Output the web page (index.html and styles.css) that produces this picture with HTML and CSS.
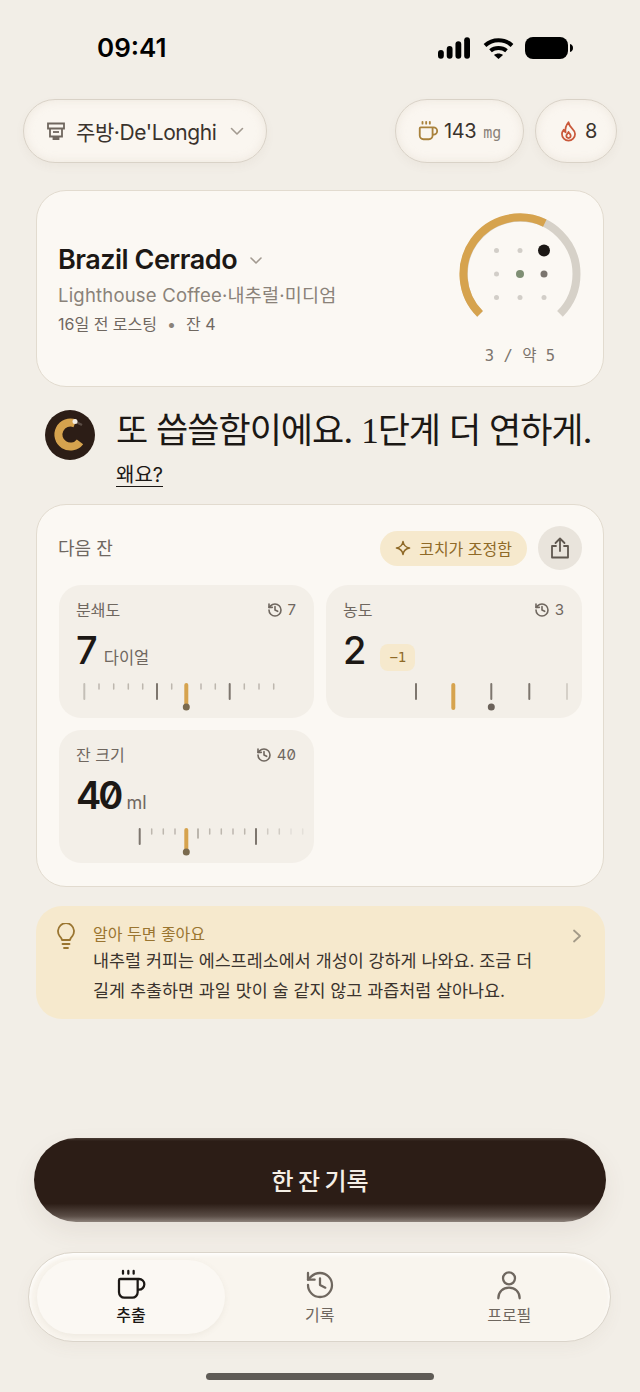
FILE: index.html
```html
<!DOCTYPE html>
<html lang="ko">
<head>
  <meta charset="UTF-8" />
  <meta name="viewport" content="width=device-width, initial-scale=1.0"/>
  <title>추출</title>
  <link rel="stylesheet" href="styles.css">
</head>
<body>
  <div class="screen">

    <div class="status">
      <span class="time">09:41</span>
      <div class="status-icons">
        <svg class="ico-signal" width="32" height="22" viewBox="0 0 33 22" fill="#000">
          <rect x="0" y="13" width="6" height="9" rx="3"/>
          <rect x="9" y="9" width="6" height="13" rx="3"/>
          <rect x="18" y="4" width="6" height="18" rx="3"/>
          <rect x="27" y="0" width="6" height="22" rx="3"/>
        </svg>
        <svg class="ico-wifi" width="31" height="22" viewBox="0 0 31 22" fill="none" stroke="#000" stroke-width="4">
          <path d="M2 8.5C9.5 1.500 21.500 1.500 29 8.5"/>
          <path d="M7.500 13.800C12 10 19 10 23.500 13.800"/>
          <path d="M11 18l4.500 4 4.500-4c-2.500-2-6.500-2-9 0z" fill="#000" stroke="none"/>
        </svg>
        <svg width="48" height="22" viewBox="0 0 48 22" fill="#000">
          <rect x="0" y="0" width="43" height="22" rx="8"/>
          <path d="M45 7c2 .5 3 2 3 4s-1 3.500-3 4z"/>
        </svg>
      </div>
    </div>

    <div class="topbar">
      <div class="pill pill-machine">
        <svg width="20" height="20" viewBox="0 0 20 20" fill="none" stroke="#6f665e" stroke-width="1.8">
          <path d="M2 2.500h16v5H2z"/>
          <path d="M4 7.500v8h12v-8"/>
          <path d="M7 11h6"/>
          <path d="M7.500 15.500v2.500h5v-2.500" fill="#6f665e"/>
        </svg>
        <span class="pill-text">주방·De'Longhi</span>
        <svg class="chev" width="16" height="16" viewBox="0 0 16 16" fill="none" stroke="#a29a90" stroke-width="1.6" stroke-linecap="round" stroke-linejoin="round"><path d="M2.500 5.500L8 11l5.500-5.500"/></svg>
      </div>
      <div class="pill-group">
        <div class="pill pill-caffeine">
          <svg width="22" height="22" viewBox="0 0 24 24" fill="none" stroke="#a9823c" stroke-width="2" stroke-linecap="round" stroke-linejoin="round">
            <path d="M10 2v2M14 2v2M6 2v2"/>
            <path d="M16 8a1 1 0 0 1 1 1v8a4 4 0 0 1-4 4H7a4 4 0 0 1-4-4V9a1 1 0 0 1 1-1h14a4 4 0 1 1 0 8h-1"/>
          </svg>
          <span class="pill-text pill-num">143</span>
          <span class="unit">mg</span>
        </div>
        <div class="pill pill-streak">
          <svg width="21" height="22" viewBox="0 0 24 24" fill="none" stroke="#c9583a" stroke-width="2" stroke-linecap="round" stroke-linejoin="round">
            <path d="M12 2c.5 3 2 5 4 7 2 2 3.500 4 3.500 6.500a7.500 7.500 0 0 1-15 0c0-2 .8-3.500 2-5 .3 1.500 1 2.500 2.200 3C8 10 9.500 5 12 2z"/>
            <path d="M12 13c.3 1.500 2.500 2.500 2.500 4.500a2.500 2.500 0 0 1-5 0c0-1.800 2-2.800 2.500-4.500z"/>
          </svg>
          <span class="pill-text pill-num">8</span>
        </div>
      </div>
    </div>

    <section class="card bean">
      <div class="bean-info">
        <div class="bean-title">
          <h1>Brazil Cerrado</h1>
          <svg width="14" height="14" viewBox="0 0 14 14" fill="none" stroke="#a29a90" stroke-width="1.6" stroke-linecap="round" stroke-linejoin="round"><path d="M2 5l5 5 5-5"/></svg>
        </div>
        <p class="bean-sub">Lighthouse Coffee·내추럴·미디엄</p>
        <p class="bean-meta">16일 전 로스팅<span class="sep">•</span>잔 4</p>
      </div>
      <div class="gauge">
        <svg width="130" height="118" viewBox="0 0 130 118" fill="none">
          <path d="M25.05 100.95A56.5 56.5 0 0 1 104.95 21.05A56.5 56.5 0 0 1 104.95 100.95" stroke="#d6d1c8" stroke-width="8"/>
          <path d="M25.05 100.95A56.5 56.5 0 0 1 89.8 10.2" stroke="#d6a34e" stroke-width="8"/>
          <g fill="#d2cec8">
            <circle cx="41.5" cy="37.5" r="2.5"/>
            <circle cx="65" cy="37.5" r="2.5"/>
            <circle cx="41.5" cy="61" r="2.5"/>
            <circle cx="41.5" cy="84.5" r="2.5"/>
            <circle cx="65" cy="84.5" r="2.5"/>
            <circle cx="89" cy="84.5" r="2.5"/>
          </g>
          <circle cx="89" cy="37.5" r="6" fill="#1c1815"/>
          <circle cx="65" cy="61" r="4" fill="#7f8f74"/>
          <circle cx="89" cy="61" r="3.5" fill="#7b756e"/>
        </svg>
        <span class="gauge-label">3 / 약 5</span>
      </div>
    </section>

    <section class="coach">
      <svg class="avatar" width="50" height="50" viewBox="0 0 50 50" fill="none">
        <circle cx="25" cy="25" r="25" fill="#2c1d16"/>
        <path d="M30 13.500A12 12 0 1 0 35 31.800" stroke="#d6a34e" stroke-width="8"/>
        <path d="M30 11.500l7 3.500" stroke="#5a4c44" stroke-width="2.500"/>
        <circle cx="30" cy="11.500" r="2.500" fill="#f0ebe3"/>
      </svg>
      <div class="coach-text">
        <h2>또 씁쓸함이에요. <span class="serif-num">1</span>단계 더 연하게.</h2>
        <a class="why">왜요?</a>
      </div>
    </section>

    <section class="card next">
      <div class="next-head">
        <span class="next-title">다음 잔</span>
        <div class="next-actions">
          <span class="coach-badge">
            <svg width="16" height="16" viewBox="0 0 16 16" fill="none" stroke="#8f6a28" stroke-width="1.6" stroke-linejoin="round"><path d="M8 1.500c.6 3.800 2.500 5.800 6.500 6.500-4 .7-5.900 2.700-6.500 6.500C7.400 10.700 5.500 8.700 1.500 8 5.500 7.300 7.400 5.300 8 1.500z"/></svg>
            코치가 조정함
          </span>
          <span class="share">
            <svg width="20" height="22" viewBox="0 0 20 22" fill="none" stroke="#5f574f" stroke-width="1.8" stroke-linecap="round" stroke-linejoin="round">
              <path d="M10 14V2M5.500 6L10 1.500 14.500 6"/>
              <path d="M6 9H2v11.500h16V9h-4"/>
            </svg>
          </span>
        </div>
      </div>

      <div class="tiles">
        <div class="tile">
          <div class="tile-head">
            <span>분쇄도</span>
            <span class="prev">
              <svg class="hist" width="16" height="16" viewBox="0 0 24 24" fill="none" stroke="#6f675f" stroke-width="2.4" stroke-linecap="round" stroke-linejoin="round"><path d="M3 12a9 9 0 1 0 9-9 9.75 9.75 0 0 0-6.74 2.74L3 8"/><path d="M3 3v5h5"/><path d="M12 7v5l4 2"/></svg>
              7
            </span>
          </div>
          <div class="tile-value"><b>7</b><span class="tile-unit">다이얼</span></div>
          <svg class="ruler" width="255" height="30" viewBox="0 0 255 30" fill="none" stroke-linecap="round">
            <path d="M25.3 1v15" stroke="#c4bfb7" stroke-width="2"/>
            <path d="M40 1v5M54.7 1v5M69.3 1v5M83.7 1v5M112.7 1v5M142 1v5M156.3 1v5M185.3 1v5M200 1v5M214.7 1v5" stroke="#bdb7ae" stroke-width="1.5"/>
            <path d="M98 1v15M170.7 1v15" stroke="#7d766e" stroke-width="2"/>
            <path d="M127.3 2v21" stroke="#d6a34e" stroke-width="4"/>
            <circle cx="127.3" cy="24" r="3.5" fill="#7a6a4e"/>
          </svg>
        </div>

        <div class="tile">
          <div class="tile-head">
            <span>농도</span>
            <span class="prev">
              <svg class="hist" width="16" height="16" viewBox="0 0 24 24" fill="none" stroke="#6f675f" stroke-width="2.4" stroke-linecap="round" stroke-linejoin="round"><path d="M3 12a9 9 0 1 0 9-9 9.75 9.75 0 0 0-6.74 2.74L3 8"/><path d="M3 3v5h5"/><path d="M12 7v5l4 2"/></svg>
              3
            </span>
          </div>
          <div class="tile-value"><b>2</b><span class="delta">−1</span></div>
          <svg class="ruler" width="256" height="30" viewBox="0 0 256 30" fill="none" stroke-linecap="round">
            <path d="M90 1v15M165.3 1v15M203.3 1v15" stroke="#7d766e" stroke-width="2"/>
            <path d="M241 1v15" stroke="#d5d0c8" stroke-width="2"/>
            <path d="M127.3 2v23" stroke="#d6a34e" stroke-width="4"/>
            <circle cx="165.3" cy="24" r="3.5" fill="#6b625a"/>
          </svg>
        </div>

        <div class="tile">
          <div class="tile-head">
            <span>잔 크기</span>
            <span class="prev">
              <svg class="hist" width="16" height="16" viewBox="0 0 24 24" fill="none" stroke="#6f675f" stroke-width="2.4" stroke-linecap="round" stroke-linejoin="round"><path d="M3 12a9 9 0 1 0 9-9 9.75 9.75 0 0 0-6.74 2.74L3 8"/><path d="M3 3v5h5"/><path d="M12 7v5l4 2"/></svg>
              <span class="zero">40</span>
            </span>
          </div>
          <div class="tile-value"><b class="zero">40</b><span class="tile-unit unit-ml">ml</span></div>
          <svg class="ruler" width="255" height="30" viewBox="0 0 255 30" fill="none" stroke-linecap="round">
            <path d="M80.7 1v15M197 1v15" stroke="#7d766e" stroke-width="2"/>
            <path d="M92.7 1v5M104.3 1v5M116 1v5M150.7 1v5M162.3 1v5M174 1v5M185.7 1v5" stroke="#bdb7ae" stroke-width="1.5"/>
            <path d="M139 1v9" stroke="#a9a39a" stroke-width="1.5"/>
            <path d="M208.7 1v5M220.3 1v5" stroke="#d0cbc3" stroke-width="1.5"/>
            <path d="M232 1v5M243.7 1v5" stroke="#e4e0d9" stroke-width="1.5"/>
            <path d="M127.3 2v21" stroke="#d6a34e" stroke-width="4"/>
            <circle cx="127.3" cy="24" r="3.5" fill="#7a6a4e"/>
          </svg>
        </div>
      </div>
    </section>

    <section class="tip">
      <svg class="tip-icon" width="20" height="26" viewBox="0 0 20 26" fill="none" stroke="#9a7530" stroke-width="1.8" stroke-linecap="round" stroke-linejoin="round">
        <path d="M6 17c-.3-1.500-1-2.500-2.300-3.900A8 8 0 1 1 16.300 13.100C15 14.500 14.300 15.500 14 17z"/>
        <path d="M6.500 21h7M8 25h4"/>
      </svg>
      <div class="tip-body">
        <div class="tip-title">알아 두면 좋아요</div>
        <p>내추럴 커피는 에스프레소에서 개성이 강하게 나와요. 조금 더<br>길게 추출하면 과일 맛이 술 같지 않고 과즙처럼 살아나요.</p>
      </div>
      <svg class="tip-arrow" width="10" height="14" viewBox="0 0 10 14" fill="none" stroke="#a39a88" stroke-width="1.8" stroke-linecap="round" stroke-linejoin="round"><path d="M2 1.500L8 7l-6 5.500"/></svg>
    </section>

    <button class="cta">한 잔 기록</button>

    <nav class="tabs">
      <div class="tab active">
        <svg width="32" height="32" viewBox="0 0 24 24" fill="none" stroke="#1c1815" stroke-width="1.7" stroke-linecap="round" stroke-linejoin="round">
          <path d="M10 1.500v2M14 1.500v2M6 1.500v2"/>
          <path d="M16 7.500a1 1 0 0 1 1 1v9a4 4 0 0 1-4 4H7a4 4 0 0 1-4-4v-9a1 1 0 0 1 1-1h14a4 4 0 1 1 0 8h-1"/>
        </svg>
        <span>추출</span>
      </div>
      <div class="tab">
        <svg width="32" height="32" viewBox="0 0 24 24" fill="none" stroke="#6f675f" stroke-width="1.7" stroke-linecap="round" stroke-linejoin="round">
          <path d="M3 12a9 9 0 1 0 9-9 9.75 9.75 0 0 0-6.74 2.74L3 8"/><path d="M3 3v5h5"/><path d="M12 7v5l4 2"/>
        </svg>
        <span>기록</span>
      </div>
      <div class="tab">
        <svg width="32" height="32" viewBox="0 0 24 24" fill="none" stroke="#6f675f" stroke-width="1.7" stroke-linecap="round" stroke-linejoin="round">
          <circle cx="12" cy="7" r="4.500"/><path d="M20 22c0-5-3.500-8-8-8s-8 3-8 8"/>
        </svg>
        <span>프로필</span>
      </div>
    </nav>

    <div class="home-bar"></div>
  </div>
</body>
</html>
```

FILE: styles.css
```css
* {
  box-sizing: border-box;
}

body {
  margin: 0;
  background-color: #f2eee7;
  color: #1c1815;
  font-family: "Inter", "Noto Sans CJK KR", sans-serif;
}

h1, h2, p {
  margin: 0;
  font-weight: inherit;
}

.screen {
  display: flex;
  flex-direction: column;
  width: 640px;
  height: 1392px;
  padding-bottom: 12px;
  overflow: hidden;
}

/* status bar */
.status {
  display: flex;
  justify-content: space-between;
  align-items: center;
  height: 99px;
  padding: 0 67px 4px 97px;
  flex-shrink: 0;
}

.time {
  font-size: 26px;
  font-weight: 600;
  color: #000;
}

.status-icons {
  display: flex;
  align-items: center;
}

.ico-signal {
  margin-right: 13px;
}

.ico-wifi {
  margin-right: 11px;
}

/* top pills */
.topbar {
  display: flex;
  justify-content: space-between;
  height: 64px;
  padding: 0 23px;
  flex-shrink: 0;
}

.pill-group {
  display: flex;
  gap: 11px;
}

.pill {
  display: flex;
  align-items: center;
  height: 64px;
  border-radius: 32px;
  border: 1px solid #d9d2c7;
  background-color: #faf6f0;
  box-shadow: inset 0 0 10px rgba(232, 224, 212, 0.7), 0 4px 10px rgba(120, 100, 80, 0.05);
}

.pill-text {
  font-size: 21px;
  color: #3a332d;
  letter-spacing: -0.4px;
}

.pill-machine {
  width: 244px;
  padding-left: 22px;
  gap: 10px;
}

.chev {
  margin-left: 2px;
}

.pill-caffeine {
  width: 129px;
  padding-left: 21px;
  gap: 5px;
}

.pill-num {
  font-size: 20px;
}

.unit {
  font-family: "DejaVu Sans Mono", monospace;
  font-size: 15px;
  color: #8a8279;
  margin-left: 2px;
  margin-top: 3px;
}

.pill-streak {
  width: 82px;
  padding-left: 22px;
  gap: 6px;
}

/* cards */
.card {
  margin: 0 36px;
  background-color: #fbf8f3;
  border: 1px solid #e2dbcf;
  border-radius: 30px;
  flex-shrink: 0;
}

.bean {
  display: flex;
  justify-content: space-between;
  height: 197px;
  margin-top: 27px;
  padding: 0 22px 0 21px;
}

.bean-info {
  padding-top: 51px;
}

.bean-title {
  display: flex;
  align-items: center;
  gap: 12px;
}

h1 {
  font-size: 27px;
  font-weight: 600;
  letter-spacing: -0.5px;
  line-height: 36px;
}

.bean-sub {
  margin-top: 4px;
  font-size: 18.5px;
  line-height: 26px;
  letter-spacing: 0.2px;
  color: #8a8279;
}

.bean-meta {
  margin-top: 4px;
  font-size: 16px;
  line-height: 24px;
  color: #6f675f;
}

.sep {
  margin: 0 10px;
  color: #8a8279;
}

.gauge {
  display: flex;
  flex-direction: column;
  align-items: center;
  padding-top: 22px;
  margin-right: -4px;
}

.gauge-label {
  margin-top: 12px;
  font-family: "DejaVu Sans Mono", "Noto Sans CJK KR", monospace;
  font-size: 15.5px;
  color: #7c756d;
}

/* coach line */
.coach {
  display: flex;
  gap: 21px;
  margin: 23px 0 0 45px;
  height: 94px;
  flex-shrink: 0;
}

.avatar {
  flex-shrink: 0;
}

h2 {
  font-size: 35px;
  line-height: 40px;
  letter-spacing: -1px;
  white-space: nowrap;
  color: #1c1815;
}

.serif-num {
  font-family: "Liberation Serif", serif;
}

.why {
  display: inline-block;
  margin-top: 12px;
  font-size: 20px;
  line-height: 22px;
  color: #1c1815;
  border-bottom: 1.5px solid #1c1815;
}

/* next shot card */
.next {
  height: 383px;
  padding: 21px 22px 0;
}

.next-head {
  display: flex;
  justify-content: space-between;
  align-items: center;
  height: 44px;
}

.next-title {
  margin: -2px 0 0 -1px;
  font-size: 18px;
  color: #6f675f;
}

.next-actions {
  display: flex;
  align-items: center;
  gap: 11px;
  margin-right: -1px;
}

.coach-badge {
  display: flex;
  align-items: center;
  gap: 8px;
  height: 35px;
  padding: 0 15px;
  border-radius: 18px;
  background-color: #f6e9cd;
  color: #8f6a28;
  font-size: 16px;
}

.share {
  display: flex;
  align-items: center;
  justify-content: center;
  width: 44px;
  height: 44px;
  border-radius: 50%;
  background-color: #e9e4dc;
}

.tiles {
  display: grid;
  grid-template-columns: 255px 256px;
  grid-auto-rows: 133px;
  gap: 12px;
  margin-top: 15px;
}

.tile {
  position: relative;
  background-color: #f3efe8;
  border-radius: 22px;
  padding: 14px 18px 0 17px;
}

.tile-head {
  display: flex;
  justify-content: space-between;
  align-items: center;
  font-size: 16px;
  line-height: 22px;
  color: #6f675f;
}

.prev {
  display: flex;
  align-items: center;
  gap: 5px;
  font-size: 15px;
}

.hist {
  display: block;
}

.tile-value {
  display: flex;
  align-items: baseline;
  margin-top: 7px;
  height: 44px;
}

.tile-value b {
  font-size: 38px;
  font-weight: 500;
  line-height: 44px;
  color: #1c1815;
}

.tile-value b.zero {
  font-weight: 600;
  letter-spacing: -3px;
}

.zero {
  font-feature-settings: "zero" 1;
}

.tile-unit {
  margin-left: 6px;
  font-size: 16.5px;
  color: #6f675f;
}

.unit-ml {
  margin-left: 6px;
  font-size: 18px;
}

.delta {
  margin-left: 14px;
  padding: 0 9px;
  height: 27px;
  line-height: 27px;
  border-radius: 8px;
  background-color: #f6e9cd;
  color: #8f6a28;
  font-family: "DejaVu Sans Mono", monospace;
  font-size: 14px;
  align-self: flex-end;
  transform: translateY(-1px);
}

.ruler {
  position: absolute;
  left: 0;
  top: 98px;
}

/* tip */
.tip {
  display: flex;
  height: 113px;
  margin: 19px 35px 0 36px;
  padding: 16px 23px 0 20px;
  border-radius: 26px;
  background-color: #f6e9cd;
  flex-shrink: 0;
}

.tip-icon {
  margin-top: 1px;
  flex-shrink: 0;
}

.tip-body {
  flex: 1;
  margin-left: 17px;
}

.tip-title {
  font-size: 16px;
  line-height: 24px;
  color: #9a7530;
}

.tip-body p {
  font-size: 17.4px;
  line-height: 30px;
  color: #3a332d;
}

.tip-arrow {
  margin-top: 7px;
}

/* bottom */
.cta {
  display: block;
  width: 572px;
  height: 84px;
  margin: auto 34px 0;
  padding: 0 0 2px;
  border: 0;
  border-radius: 42px;
  background: linear-gradient(#4a3d36 0, #2c1d16 3px, #2c1d16 78%, #5a4d46 93%, #8d827b 100%);
  box-shadow: 0 10px 24px rgba(90, 70, 50, 0.08);
  color: #f5efe6;
  font-family: inherit;
  font-size: 24px;
  font-weight: 500;
  word-spacing: -2px;
  flex-shrink: 0;
}

.tabs {
  display: grid;
  grid-template-columns: 188px 1fr 1fr;
  height: 90px;
  margin: 30px 29px 0 28px;
  padding: 7px 6px 7px 8px;
  border: 1px solid #dad4ca;
  border-radius: 45px;
  background-color: #f9f5ee;
  box-shadow: inset 0 2px 4px #fff, 0 6px 16px rgba(120, 100, 80, 0.05);
  flex-shrink: 0;
}

.tab {
  display: flex;
  flex-direction: column;
  align-items: center;
  padding-top: 9px;
  gap: 3px;
  font-size: 16px;
  line-height: 22px;
  color: #6f675f;
}

.tab.active {
  background-color: #fbf8f3;
  border-radius: 38px;
  box-shadow: 0 2px 6px rgba(120, 100, 80, 0.08);
  color: #1c1815;
  font-weight: 500;
}

.home-bar {
  width: 228px;
  height: 7px;
  margin: 31px auto 0;
  border-radius: 4px;
  background-color: #5f5b56;
  flex-shrink: 0;
}
```
